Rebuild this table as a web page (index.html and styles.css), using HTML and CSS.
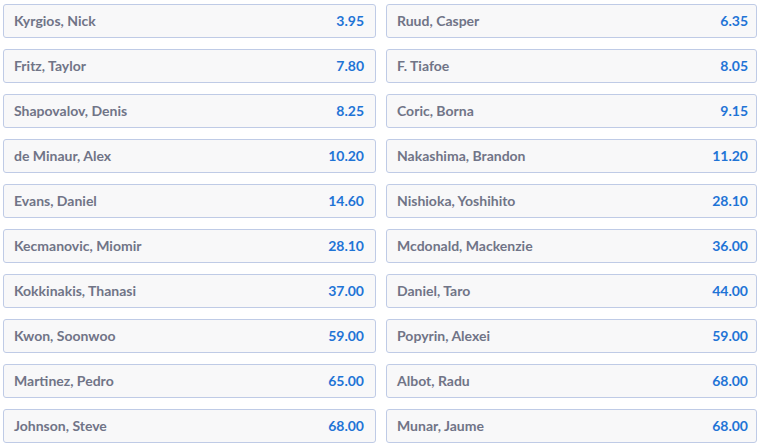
FILE: index.html
```html
<!DOCTYPE html>
<html lang="en">
<head>
<meta charset="utf-8">
<title>Odds</title>
<link rel="stylesheet" href="styles.css">
</head>
<body>
<div class="grid">
  <div class="card"><span class="name">Kyrgios, Nick</span><span class="price">3.95</span></div>
  <div class="card"><span class="name">Ruud, Casper</span><span class="price">6.35</span></div>
  <div class="card"><span class="name">Fritz, Taylor</span><span class="price">7.80</span></div>
  <div class="card"><span class="name">F. Tiafoe</span><span class="price">8.05</span></div>
  <div class="card"><span class="name">Shapovalov, Denis</span><span class="price">8.25</span></div>
  <div class="card"><span class="name">Coric, Borna</span><span class="price">9.15</span></div>
  <div class="card"><span class="name">de Minaur, Alex</span><span class="price">10.20</span></div>
  <div class="card"><span class="name">Nakashima, Brandon</span><span class="price">11.20</span></div>
  <div class="card"><span class="name">Evans, Daniel</span><span class="price">14.60</span></div>
  <div class="card"><span class="name">Nishioka, Yoshihito</span><span class="price">28.10</span></div>
  <div class="card"><span class="name">Kecmanovic, Miomir</span><span class="price">28.10</span></div>
  <div class="card"><span class="name">Mcdonald, Mackenzie</span><span class="price">36.00</span></div>
  <div class="card"><span class="name">Kokkinakis, Thanasi</span><span class="price">37.00</span></div>
  <div class="card"><span class="name">Daniel, Taro</span><span class="price">44.00</span></div>
  <div class="card"><span class="name">Kwon, Soonwoo</span><span class="price">59.00</span></div>
  <div class="card"><span class="name">Popyrin, Alexei</span><span class="price">59.00</span></div>
  <div class="card"><span class="name">Martinez, Pedro</span><span class="price">65.00</span></div>
  <div class="card"><span class="name">Albot, Radu</span><span class="price">68.00</span></div>
  <div class="card"><span class="name">Johnson, Steve</span><span class="price">68.00</span></div>
  <div class="card"><span class="name">Munar, Jaume</span><span class="price">68.00</span></div>
</div>
</body>
</html>
```
FILE: styles.css
```css
html, body {
  margin: 0;
  background: #ffffff;
}
body {
  padding: 4px 6px 0 3px;
  font-family: Lato, "Liberation Sans", sans-serif;
}
.grid {
  display: grid;
  grid-template-columns: 373px 371px;
  column-gap: 10px;
  row-gap: 11px;
}
.card {
  box-sizing: border-box;
  height: 34px;
  border: 1px solid #bfcbe6;
  border-radius: 3px;
  background: #f8f8f9;
  display: flex;
  align-items: center;
  justify-content: space-between;
  padding: 0 11px 2px 10px;
}
.card:nth-child(even) {
  padding-right: 8px;
}
.name {
  font-size: 14px;
  color: #707487;
  font-weight: 700;
}
.price {
  font-size: 14px;
  font-weight: 700;
  color: #1f74d6;
}
```
